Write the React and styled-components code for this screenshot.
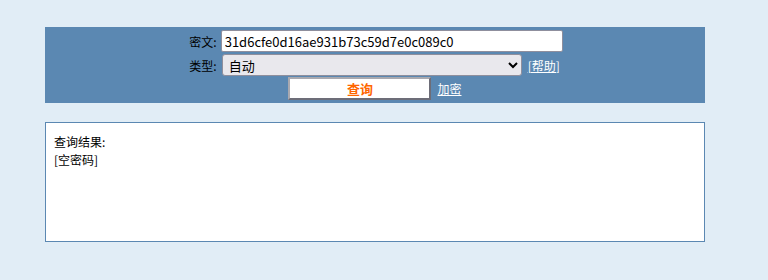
import React, { useState } from "react";
import styled, { createGlobalStyle } from "styled-components";

const GlobalStyle = createGlobalStyle`
  html, body {
    margin: 0;
    padding: 0;
    background: #e1edf6;
  }
  body {
    font-family: "Noto Sans CJK SC", "Noto Sans", sans-serif;
    font-size: 12px;
    color: #000;
  }
`;

const Page = styled.div`
  padding: 27px 0 0 45px;
  width: 660px;
`;

const Panel = styled.form`
  background: #5b88b2;
  padding: 3px 0 3px;
  display: flex;
  flex-direction: column;
  align-items: center;
`;

const Grid = styled.div`
  display: grid;
  grid-template-columns: auto 342px;
  column-gap: 4px;
  row-gap: 2px;
  align-items: center;
  padding-left: 2px;
`;

const Label = styled.label`
  text-align: right;
  font-size: 12px;
  color: #000;
  white-space: nowrap;
`;

const TextInput = styled.input`
  box-sizing: border-box;
  width: 342px;
  height: 22px;
  margin: 0;
  padding: 1px 3px;
  border: 1px solid #8f8f9d;
  border-radius: 2px;
  background: #fff;
  font-family: "Noto Sans CJK SC", sans-serif;
  font-size: 13px;
  color: #000;
  outline: none;
`;

const Line = styled.div`
  display: flex;
  align-items: center;
  gap: 6px;
`;

const Select = styled.select`
  box-sizing: border-box;
  width: 300px;
  height: 22px;
  margin: 0 0 0 1px;
  padding: 0 2px;
  border: 1px solid #8f8f9d;
  border-radius: 3px;
  background: #e9e8ed;
  font-family: "Noto Sans CJK SC", sans-serif;
  font-size: 13px;
  color: #000;
`;

const Link = styled.a`
  color: #fff;
  text-decoration: underline;
  font-size: 12px;
  cursor: pointer;
`;

const Actions = styled.div`
  display: flex;
  align-items: center;
  gap: 6px;
  margin-top: 1px;
`;

const SubmitButton = styled.button`
  box-sizing: border-box;
  width: 143px;
  height: 23px;
  margin: 0;
  padding: 0;
  background: #fff;
  border: 2px solid;
  border-color: #a9a9b0 #6d6d78 #6d6d78 #a9a9b0;
  color: #ff6600;
  font-family: "Noto Sans CJK SC", sans-serif;
  font-size: 13px;
  font-weight: bold;
  cursor: pointer;
`;

const Result = styled.div`
  box-sizing: border-box;
  margin-top: 19px;
  height: 120px;
  border: 1px solid #5b88b2;
  background: #fff;
  padding: 10px 8px;
  line-height: 18px;
  font-size: 12px;
`;

export default function App() {
  const [hash, setHash] = useState("31d6cfe0d16ae931b73c59d7e0c089c0");
  const [type, setType] = useState("auto");

  return (
    <>
      <GlobalStyle />
      <Page>
        <Panel onSubmit={(e) => e.preventDefault()}>
          <Grid>
            <Label htmlFor="hash">密文:</Label>
            <TextInput
              id="hash"
              value={hash}
              onChange={(e) => setHash(e.target.value)}
            />
            <Label htmlFor="type">类型:</Label>
            <Line>
              <Select
                id="type"
                value={type}
                onChange={(e) => setType(e.target.value)}
              >
                <option value="auto">自动</option>
                <option value="md5">md5</option>
                <option value="sha1">sha1</option>
              </Select>
              <Link>[帮助]</Link>
            </Line>
          </Grid>
          <Actions>
            <SubmitButton type="submit">查询</SubmitButton>
            <Link>加密</Link>
          </Actions>
        </Panel>
        <Result>
          查询结果:
          <br />
          [空密码]
        </Result>
      </Page>
    </>
  );
}
